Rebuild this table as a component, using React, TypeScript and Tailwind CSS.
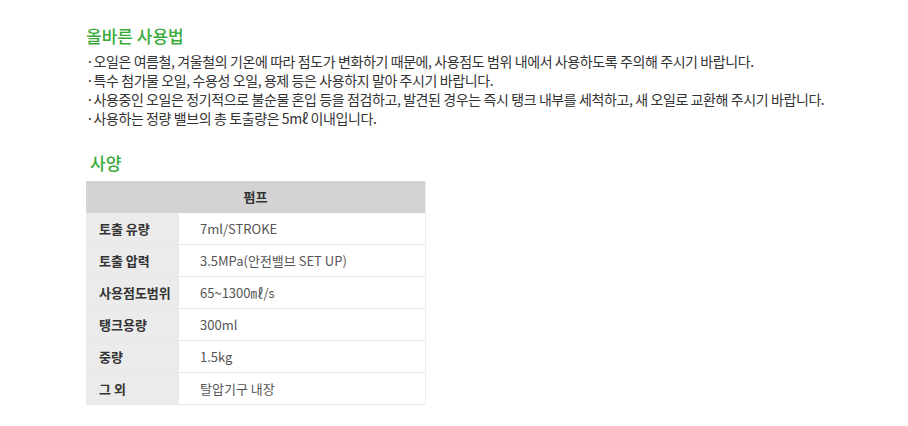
import React from "react";

const notes = [
  "·오일은 여름철, 겨울철의 기온에 따라 점도가 변화하기 때문에, 사용점도 범위 내에서 사용하도록 주의해 주시기 바랍니다.",
  "·특수 첨가물 오일, 수용성 오일, 용제 등은 사용하지 말아 주시기 바랍니다.",
  "·사용중인 오일은 정기적으로 불순물 혼입 등을 점검하고, 발견된 경우는 즉시 탱크 내부를 세척하고, 새 오일로 교환해 주시기 바랍니다.",
  "·사용하는 정량 밸브의 총 토출량은 5mℓ 이내입니다.",
];

const specs: [string, string][] = [
  ["토출 유량", "7ml/STROKE"],
  ["토출 압력", "3.5MPa(안전밸브 SET UP)"],
  ["사용점도범위", "65~1300㎖/s"],
  ["탱크용량", "300ml"],
  ["중량", "1.5kg"],
  ["그 외", "탈압기구 내장"],
];

const App: React.FC = () => {
  return (
    <div
      className="w-[908px] h-[426px] bg-white text-[#333] overflow-hidden"
      style={{ fontFamily: '"Noto Sans CJK KR", "Noto Sans", sans-serif' }}
    >
      <div className="pl-[86px] pt-[24px]">
        {/* 올바른 사용법 */}
        <h2 className="text-[17px] leading-[24px] text-[#3aab3a] font-medium mb-[4px]">
          올바른 사용법
        </h2>
        <ul className="text-[14px] leading-[19px] text-[#333] tracking-[-0.4px]">
          {notes.map((n, i) => (
            <li key={i}>{n}</li>
          ))}
        </ul>

        {/* 사양 */}
        <h2 className="text-[17px] leading-[24px] text-[#3aab3a] font-medium mt-[23px] mb-[6px] pl-[4px]">
          사양
        </h2>
        <div className="w-[340px] border-r border-[#eeeeee] text-[13px]">
          <div className="h-[32px] bg-[#d3d3d3] flex items-center justify-center font-bold text-[#333]">
            펌프
          </div>
          {specs.map(([label, value], i) => (
            <div key={i} className="flex h-[32px] border-b border-[#e8e8e8]">
              <div className="w-[93px] bg-[#ebebeb] flex items-center pl-[13px] font-bold text-[#333]">
                {label}
              </div>
              <div className="flex-1 flex items-center pl-[21px] text-[#555]">
                {value}
              </div>
            </div>
          ))}
        </div>
      </div>
    </div>
  );
};

export default App;
